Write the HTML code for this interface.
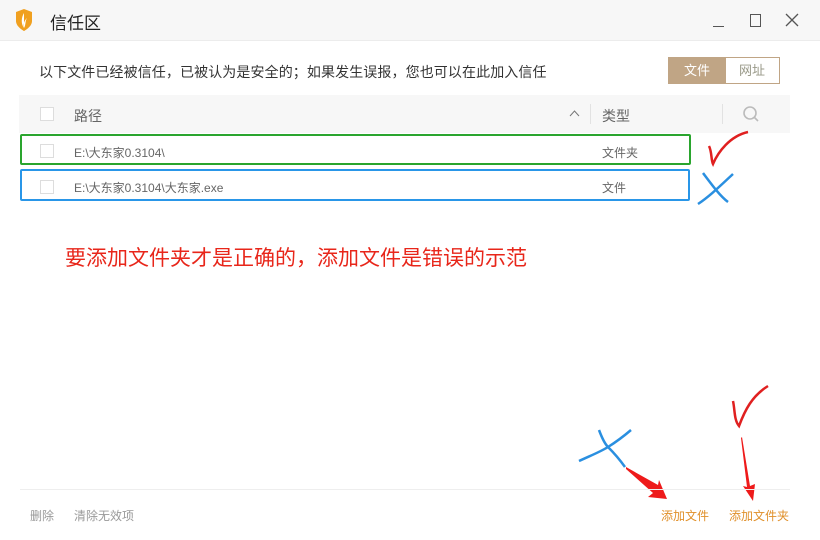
<!DOCTYPE html>
<html><head><meta charset="utf-8"><style>
body{margin:0;width:820px;height:540px;background:#fff;font-family:"Liberation Sans","Noto Sans CJK SC",sans-serif;position:relative;overflow:hidden}
.a{position:absolute;white-space:nowrap}
</style></head><body>
<div class="a" style="left:0;top:0;width:820px;height:40px;background:#f7f7f7;border-bottom:1px solid #ececec"></div>
<svg class="a" style="left:13px;top:8px" width="22" height="24" viewBox="0 0 22 24"><path d="M3 4 L11 1 L19 4 V13 C19 19 11 23 11 23 C11 23 3 19 3 13Z" fill="#f0a020"/><path d="M11 5 C8 10 8 16 11 20 C10 15 12 12 14 10 C12 13 13 17 11 20" fill="#fff"/></svg>
<div class="a" style="left:50px;top:9px;font-size:17px;color:#222">信任区</div>
<div class="a" style="left:713px;top:26px;width:11px;height:1px;background:#555"></div>
<div class="a" style="left:750px;top:14px;width:9px;height:11px;border:1px solid #555"></div>
<svg class="a" style="left:785px;top:13px" width="14" height="14"><path d="M1 1 L13 13 M13 1 L1 13" stroke="#555" stroke-width="1.3"/></svg>
<div class="a" style="left:39px;top:62px;font-size:14px;color:#333;letter-spacing:0.1px">以下文件已经被信任，已被认为是安全的；如果发生误报，您也可以在此加入信任</div>
<div class="a" style="left:668px;top:57px;width:56px;height:25px;background:#c0a585;color:#fff;font-size:13px;text-align:center;line-height:25px;border:1px solid #c0a585">文件</div>
<div class="a" style="left:725px;top:57px;width:54px;height:25px;border:1px solid #c0a585;border-left:none;color:#998;font-size:13px;text-align:center;line-height:25px">网址</div>
<div class="a" style="left:19px;top:95px;width:771px;height:38px;background:#f7f7f7"></div>
<div class="a" style="left:40px;top:107px;width:12px;height:12px;border:1px solid #ddd;background:#fff"></div>
<div class="a" style="left:74px;top:106px;font-size:14px;color:#666">路径</div>
<svg class="a" style="left:569px;top:110px" width="11" height="7"><path d="M1 6 L5.5 1 L10 6" stroke="#777" fill="none"/></svg>
<div class="a" style="left:590px;top:104px;width:1px;height:20px;background:#e2e2e2"></div>
<div class="a" style="left:602px;top:106px;font-size:14px;color:#666">类型</div>
<div class="a" style="left:722px;top:104px;width:1px;height:20px;background:#e2e2e2"></div>
<svg class="a" style="left:742px;top:105px" width="18" height="18"><circle cx="8" cy="8" r="6" stroke="#bbb" stroke-width="1.6" fill="none"/><path d="M12 12 L16 16" stroke="#bbb" stroke-width="1.6"/></svg>
<div class="a" style="left:20px;top:134px;width:667px;height:27px;border:2px solid #2aa52e;border-radius:2px"></div>
<div class="a" style="left:20px;top:169px;width:666px;height:28px;border:2px solid #2996e8;border-radius:2px"></div>
<div class="a" style="left:40px;top:144px;width:12px;height:12px;border:1px solid #ddd"></div>
<div class="a" style="left:40px;top:180px;width:12px;height:12px;border:1px solid #ddd"></div>
<div class="a" style="left:74px;top:144px;font-size:12px;color:#666">E:\大东家0.3104\</div>
<div class="a" style="left:74px;top:179px;font-size:12px;color:#666">E:\大东家0.3104\大东家.exe</div>
<div class="a" style="left:602px;top:144px;font-size:12px;color:#666">文件夹</div>
<div class="a" style="left:602px;top:179px;font-size:12px;color:#666">文件</div>
<svg class="a" style="left:0;top:0" width="820" height="540">
<path d="M709 146 C712 152 711 160 713 164 C718 152 730 136 748 132" stroke="#e02020" stroke-width="2.5" fill="none"/>
<path d="M703 173 C712 185 720 196 728 202 M733 174 C720 186 710 196 698 204" stroke="#2a8fe0" stroke-width="2.5" fill="none"/>
<path d="M733 401 C735 410 734 420 739 426 C745 410 752 396 768 386" stroke="#e02020" stroke-width="2.5" fill="none"/>
<path d="M579 461 C592 455 600 452 608 447 C616 442 624 436 631 430" stroke="#2a8fe0" stroke-width="2.5" fill="none"/>
<path d="M599 430 C602 438 605 444 608 447 C614 453 620 460 625 467" stroke="#2a8fe0" stroke-width="2.5" fill="none"/>
<path d="M626 467 L658 485 L659 480 L667 499 L648 497 L653 493 L626 469Z" fill="#ee1a1a"/>
<path d="M742 437 L750 486 L755 484 L753 501 L743 486 L747 487 L741 438Z" fill="#ee1a1a"/>
</svg>
<div class="a" style="left:65px;top:242px;font-size:21px;color:#e8261a">要添加文件夹才是正确的，添加文件是错误的示范</div>
<div class="a" style="left:20px;top:489px;width:770px;height:1px;background:#eee"></div>
<div class="a" style="left:30px;top:507px;font-size:12px;color:#999">删除</div>
<div class="a" style="left:74px;top:507px;font-size:12px;color:#999">清除无效项</div>
<div class="a" style="left:661px;top:507px;font-size:12px;color:#e0902a">添加文件</div>
<div class="a" style="left:729px;top:507px;font-size:12px;color:#e0902a">添加文件夹</div>
</body></html>
